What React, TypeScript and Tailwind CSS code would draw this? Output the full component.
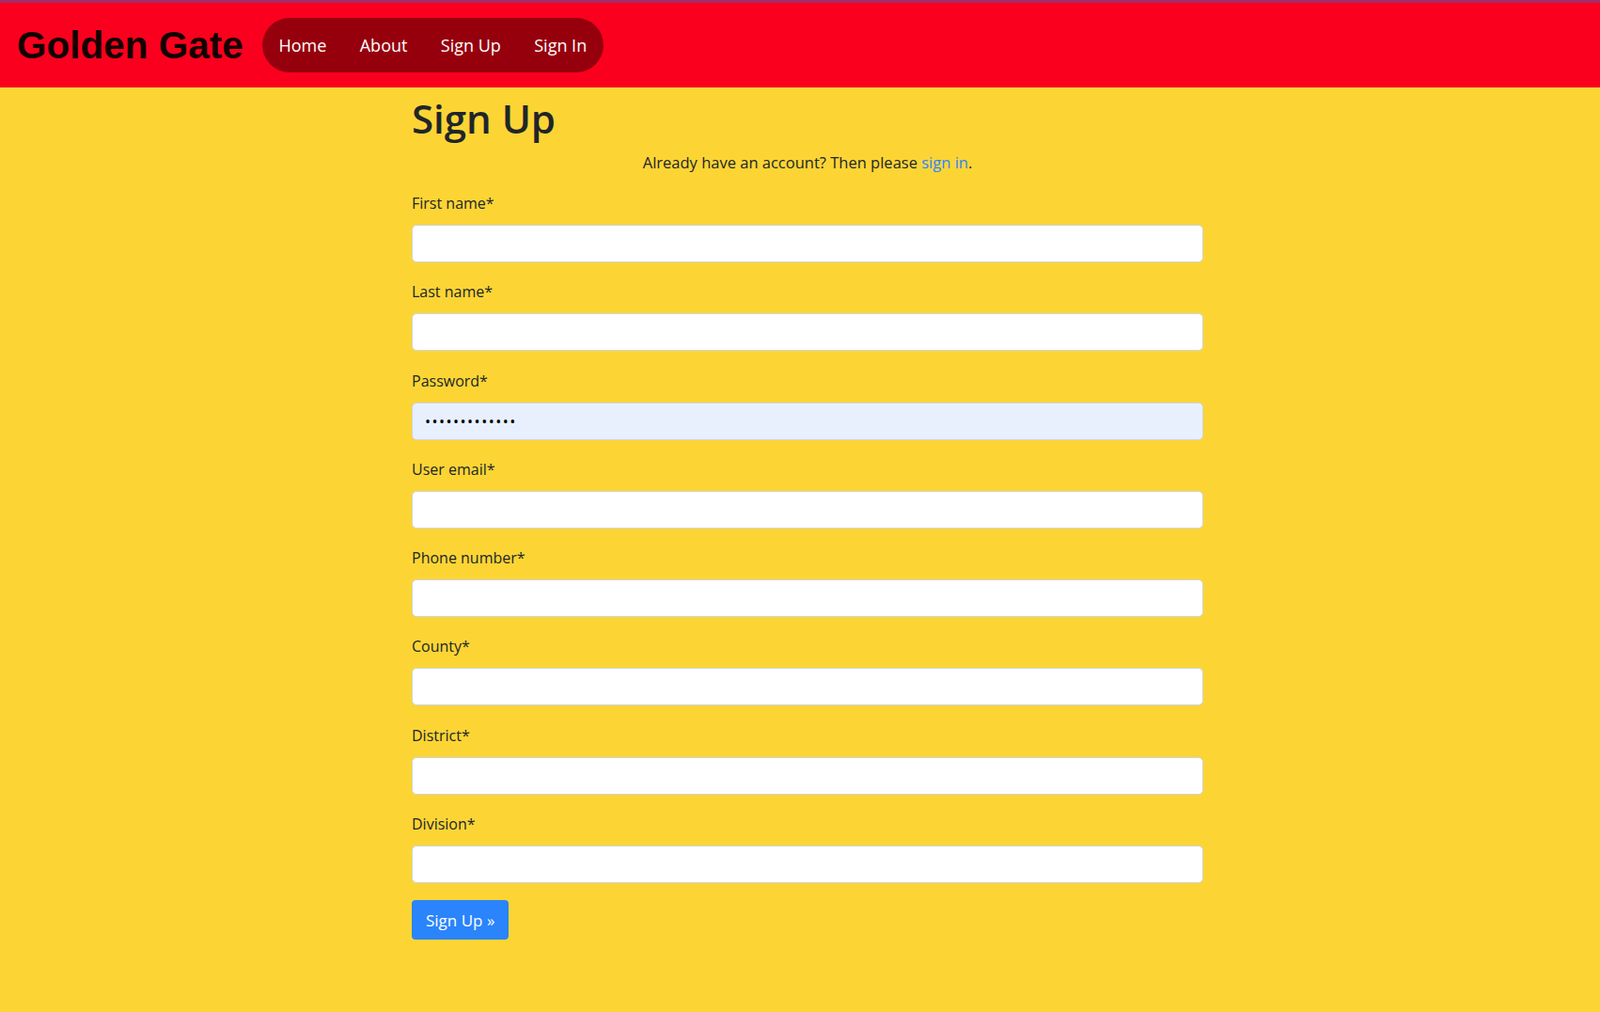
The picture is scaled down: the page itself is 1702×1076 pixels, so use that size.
import React from 'react';

const fields = [
  { label: 'First name*', type: 'text' },
  { label: 'Last name*', type: 'text' },
  { label: 'Password*', type: 'password', value: '•••••••••••••' },
  { label: 'User email*', type: 'email' },
  { label: 'Phone number*', type: 'tel' },
  { label: 'County*', type: 'text' },
  { label: 'District*', type: 'text' },
  { label: 'Division*', type: 'text' },
];

const navLinks = ['Home', 'About', 'Sign Up', 'Sign In'];

const Header = () => (
  <header className="border-t-[3px] border-[#a52d6b] bg-[#fb001e]">
    <div className="flex h-[90px] items-center pl-[18px]">
      <h1 className="mr-[20px] font-['Liberation_Sans',Arial,sans-serif] text-[40.5px] font-bold leading-none text-[#120000]">
        Golden Gate
      </h1>
      <nav className="flex h-[58px] items-center rounded-full bg-[#96000d]">
        {navLinks.map((link) => (
          <a key={link} href="#" className="px-[17.7px] text-[18px] text-white">
            {link}
          </a>
        ))}
      </nav>
    </div>
  </header>
);

export default function App() {
  return (
    <div className="min-h-[1076px] bg-[#fcd535] font-['Open_Sans','Noto_Sans',sans-serif] text-[#212529]">
      <Header />
      <main className="ml-[438px] w-[842px] pt-[9px]">
        <h2 className="mb-[11px] text-[42px] font-semibold leading-[48px]">Sign Up</h2>
        <p className="mb-[18px] text-center text-[16.5px] leading-[24px]">
          Already have an account? Then please{' '}
          <a href="#" className="text-[#2e86fc]">
            sign in
          </a>
          .
        </p>
        <form>
          {fields.map((field) => (
            <div key={field.label} className="mb-[18.3px]">
              <label className="mb-[10px] block text-[16px] leading-[26px]">{field.label}</label>
              <input
                type={field.type}
                defaultValue={field.value}
                className={
                  field.type === 'password'
                    ? 'block h-[40px] w-full rounded-[5px] border border-[#ced4da] bg-[#e8f0fe] px-[13px] text-[16px] tracking-[1.5px] text-black outline-none'
                    : 'block h-[40px] w-full rounded-[5px] border border-[#ced4da] bg-white px-[13px] text-[16px] outline-none'
                }
              />
            </div>
          ))}
          <button
            type="button"
            className="h-[42px] rounded-[4px] bg-[#2a84fc] px-[15px] text-[17px] text-white"
          >
            Sign Up »
          </button>
        </form>
      </main>
    </div>
  );
}
